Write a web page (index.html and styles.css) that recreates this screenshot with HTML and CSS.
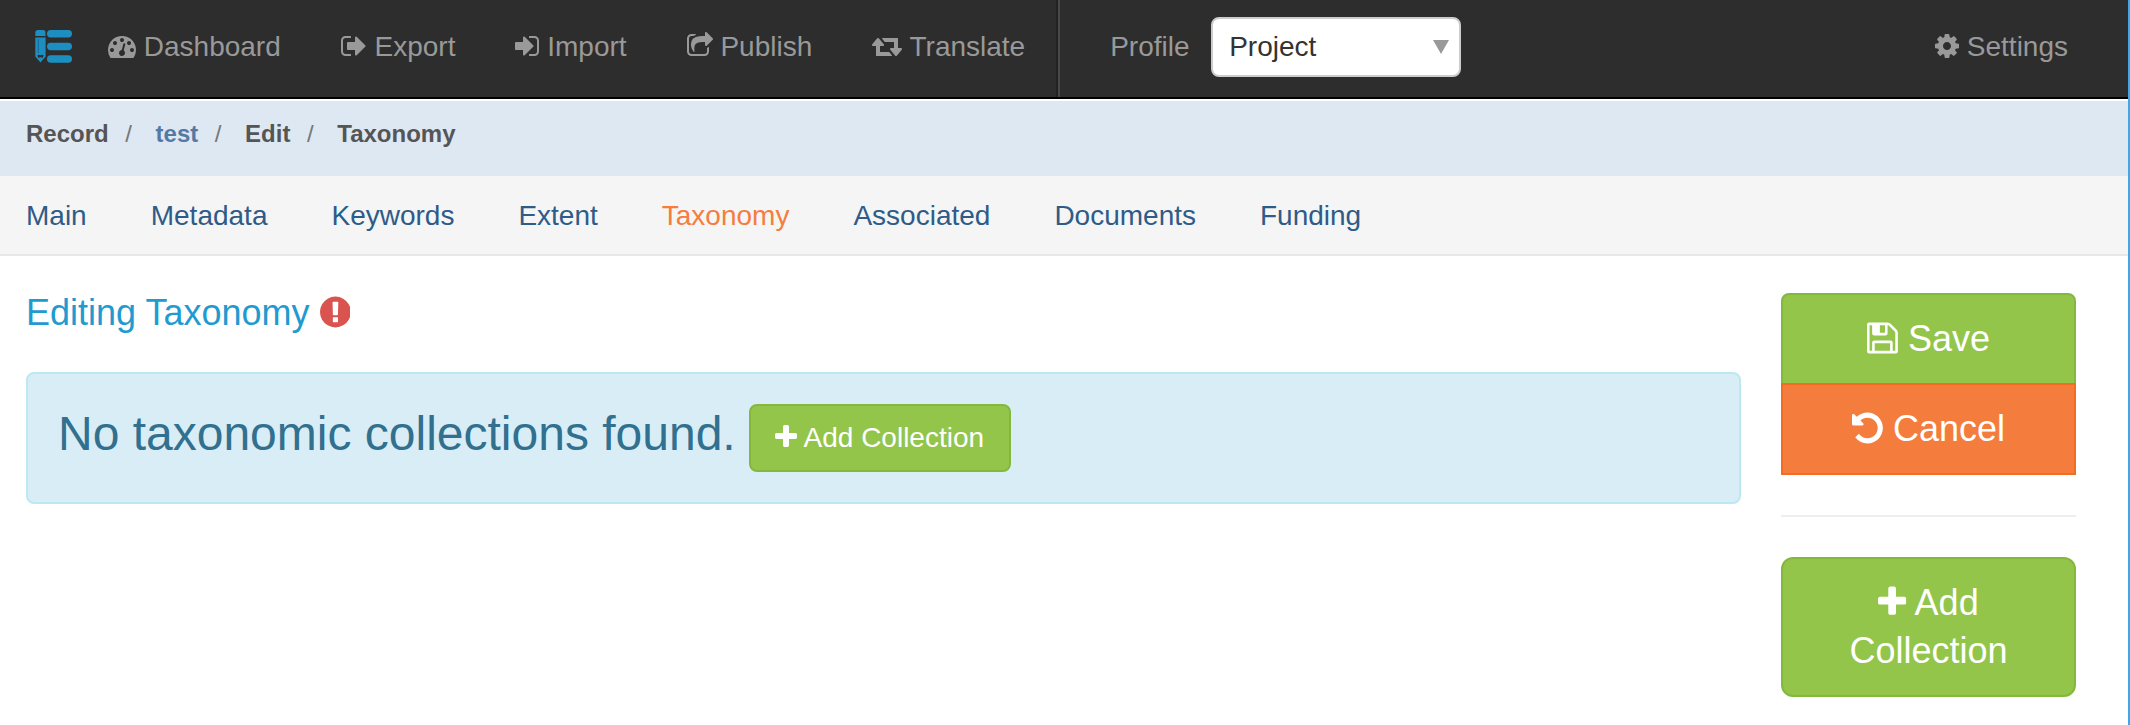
FILE: index.html
```html
<!DOCTYPE html>
<html lang="en">
<head>
<meta charset="utf-8">
<title>Editing Taxonomy</title>
<link rel="stylesheet" href="styles.css">
</head>
<body>
<svg class="defs" width="0" height="0">
<symbol id="plus" viewBox="192 0 1408 1792"><path d="M1600 736v192q0 40-28 68t-68 28h-416v416q0 40-28 68t-68 28h-192q-40 0-68-28t-28-68v-416h-416q-40 0-68-28t-28-68v-192q0-40 28-68t68-28h416v-416q0-40 28-68t68-28h192q40 0 68 28t28 68v416h416q40 0 68 28t28 68z"/></symbol>
</svg>
<div class="app">
<nav class="navbar">
  <a class="brand"><svg class="logo" viewBox="0 0 38 34"><path d="M3 0h5q2.500 0 2.500 2.500V6H.3V2.500Q.3 0 3 0zM.3 7.500h10.300V26.500L5.500 32.500.3 26.500z"/><path class="slit" d="M3.300 9v14"/><path class="ink" d="M2.500 25.300q1.500-1 3 0 1.500-1 3 0l-.8 2.700-1.200-.8H4.500l-1.200.8z"/><rect x="12" y="0" width="25" height="7.500" rx="3.700"/><rect x="12" y="12.700" width="25" height="7.500" rx="3.700"/><rect x="12" y="25.200" width="25" height="7.500" rx="3.700"/></svg></a>
  <a class="nav-item"><svg class="icon" viewBox="0 0 1792 1792"><path d="M384 1152q0-53-37.500-90.500t-90.500-37.500-90.500 37.500-37.500 90.500 37.500 90.500 90.500 37.500 90.500-37.500 37.500-90.500zm192-448q0-53-37.500-90.500t-90.500-37.500-90.500 37.500-37.500 90.500 37.500 90.500 90.500 37.500 90.500-37.500 37.500-90.500zm428 481l101-382q6-26-7.500-48.500t-38.500-29.500-48 6.500-30 39.500l-101 382q-60 5-107 43.500t-63 98.500q-20 77 20 146t117 89 146-20 89-117q16-60-6-117t-72-91zm660-33q0-53-37.500-90.500t-90.500-37.500-90.500 37.500-37.500 90.500 37.500 90.500 90.500 37.500 90.500-37.500 37.500-90.500zm-640-640q0-53-37.500-90.500t-90.500-37.500-90.500 37.500-37.500 90.500 37.500 90.500 90.500 37.500 90.500-37.500 37.500-90.500zm448 192q0-53-37.500-90.500t-90.500-37.500-90.500 37.500-37.500 90.500 37.500 90.500 90.500 37.500 90.500-37.500 37.500-90.500zm320 448q0 261-141 483-19 29-54 29h-1402q-35 0-54-29-141-221-141-483 0-182 71-348t191-286 286-191 348-71 348 71 286 191 191 286 71 348z"/></svg> Dashboard</a>
  <a class="nav-item"><svg class="icon" viewBox="64 0 1664 1792"><path d="M704 1440q0 4 1 20t.5 26.500-3 23.500-10 19.500-20.500 6.500h-320q-119 0-203.500-84.500t-84.500-203.500v-704q0-119 84.500-203.500t203.500-84.500h320q13 0 22.500 9.500t9.500 22.500q0 4 1 20t.5 26.500-3 23.500-10 19.500-20.500 6.500h-320q-66 0-113 47t-47 113v704q0 66 47 113t113 47h312l11.500 1 11.500 3 8 5.500 7 9 2 13.500zm928-544q0 26-19 45l-544 544q-19 19-45 19t-45-19-19-45v-288h-448q-26 0-45-19t-19-45v-384q0-26 19-45t45-19h448v-288q0-26 19-45t45-19 45 19l544 544q19 19 19 45z"/></svg> Export</a>
  <a class="nav-item"><svg class="icon" viewBox="128 0 1536 1792"><path d="M1312 896q0 26-19 45l-544 544q-19 19-45 19t-45-19-19-45v-288h-448q-26 0-45-19t-19-45v-384q0-26 19-45t45-19h448v-288q0-26 19-45t45-19 45 19l544 544q19 19 19 45zm352-352v704q0 119-84.500 203.500t-203.500 84.500h-320q-13 0-22.500-9.500t-9.500-22.500q0-4-1-20t-.5-26.500 3-23.500 10-19.500 20.500-6.500h320q66 0 113-47t47-113v-704q0-66-47-113t-113-47h-312l-11.500-1-11.500-3-8-5.500-7-9-2-13.500q0-4-1-20t-.5-26.500 3-23.500 10-19.500 20.500-6.500h320q119 0 203.500 84.500t84.500 203.500z"/></svg> Import</a>
  <a class="nav-item"><svg class="icon" viewBox="64 0 1664 1792"><path d="M1472 989v259q0 119-84.500 203.500t-203.500 84.500h-832q-119 0-203.500-84.500t-84.500-203.500v-832q0-119 84.500-203.500t203.500-84.500h255q13 0 22.500 9.500t9.500 22.500q0 27-26 32-77 26-133 60-10 4-16 4h-112q-66 0-113 47t-47 113v832q0 66 47 113t113 47h832q66 0 113-47t47-113v-214q0-19 18-29 28-13 54-37 16-16 35-8 21 9 21 29zm237-496l-384 384q-18 19-45 19-12 0-25-5-39-17-39-59v-192h-160q-323 0-438 131-119 137-74 473 3 23-20 34-8 2-12 2-16 0-26-13-10-14-21-31t-39.500-68.500-49.500-99.500-38.500-114-17.500-122q0-49 3.500-91t14-90 28-88 47-81.500 68.500-74 94.500-61.500 124.500-48.500 159.500-30.500 196.500-11h160v-192q0-42 39-59 13-5 25-5 26 0 45 19l384 384q19 19 19 45t-19 45z"/></svg> Publish</a>
  <a class="nav-item"><svg class="icon" viewBox="0 0 1920 1792"><path d="M1280 1504q0 13-9.500 22.500t-22.500 9.500h-960q-8 0-13.500-2t-9-7-5.500-8-3-11.500-1-11.500v-600h-192q-26 0-45-19t-19-45q0-24 15-41l320-384q19-22 49-22t49 22l320 384q15 17 15 41 0 26-19 45t-45 19h-192v384h576q16 0 25 11l160 192q7 10 7 21zm640-416q0 24-15 41l-320 384q-20 23-49 23t-49-23l-320-384q-15-17-15-41 0-26 19-45t45-19h192v-384h-576q-16 0-25-12l-160-192q-7-9-7-20 0-13 9.500-22.500t22.500-9.500h960q8 0 13.500 2t9 7 5.500 8 3 11.500 1 11.500v600h192q26 0 45 19t19 45z"/></svg> Translate</a>
  <div class="profile"><span>Profile</span><div class="select"><span>Project</span><svg class="caret" viewBox="0 0 16 14"><path d="M0 0h16L8 14z"/></svg></div></div>
  <a class="nav-item settings"><svg class="icon" viewBox="128 0 1536 1792"><path d="M1152 896q0-106-75-181t-181-75-181 75-75 181 75 181 181 75 181-75 75-181zm512-109v222q0 12-8 23t-20 13l-185 28q-19 54-39 91 35 50 107 138 10 12 10 25t-9 23q-27 37-99 108t-94 71q-12 0-26-9l-138-108q-44 23-91 38-16 136-29 186-7 28-36 28h-222q-14 0-24.500-8.500t-11.500-21.500l-28-184q-49-16-90-37l-141 107q-10 9-25 9-14 0-25-11-126-114-165-168-7-10-7-23 0-12 8-23 15-21 51-66.500t54-70.500q-27-50-41-99l-183-27q-13-2-21-12.500t-8-23.500v-222q0-12 8-23t19-13l186-28q14-46 39-92-40-57-107-138-10-12-10-24 0-10 9-23 26-36 98.500-107.500t94.500-71.500q13 0 26 10l138 107q44-23 91-38 16-136 29-186 7-28 36-28h222q14 0 24.500 8.500t11.500 21.500l28 184q49 16 90 37l142-107q9-9 24-9 13 0 25 10 129 119 165 170 7 8 7 22 0 12-8 23-15 21-51 66.500t-54 70.500q26 50 41 98l183 28q13 2 21 12.500t8 23.500z"/></svg> Settings</a>
</nav>
<div class="crumbs"><b>Record</b><i>/</i><b class="link">test</b><i>/</i><b>Edit</b><i>/</i><b>Taxonomy</b></div>
<div class="tabs"><a>Main</a><a>Metadata</a><a>Keywords</a><a>Extent</a><a class="active">Taxonomy</a><a>Associated</a><a>Documents</a><a>Funding</a></div>
<div class="content">
  <main class="main">
    <h4 class="title">Editing Taxonomy <svg class="icon danger" viewBox="128 0 1536 1792"><path d="M896 128q209 0 385.500 103t279.500 279.500 103 385.500-103 385.500-279.500 279.500-385.500 103-385.500-103-279.500-279.500-103-385.500 103-385.500 279.500-279.500 385.500-103zm128 1247v-190q0-14-9-23.500t-22-9.500h-192q-13 0-23 10t-10 23v190q0 13 10 23t23 10h192q13 0 22-9.500t9-23.500zm-2-344l18-621q0-12-10-18-10-8-24-8h-220q-14 0-24 8-10 6-10 18l17 621q0 10 10 17.500t24 7.500h185q14 0 23.500-7.500t10.500-17.500z"/></svg></h4>
    <div class="alert"><h3>No taxonomic collections found.</h3><button class="btn"><svg class="icon" viewBox="192 0 1408 1792"><use href="#plus" x="192" width="1408" height="1792"/></svg> Add Collection</button></div>
  </main>
  <aside class="side">
    <button class="btn lg save"><svg class="icon" viewBox="128 0 1536 1792"><path d="M512 1536h768v-384h-768v384zm896 0h128v-896q0-14-10-38.500t-20-34.500l-281-281q-10-10-34-20t-39-10v416q0 40-28 68t-68 28h-576q-40 0-68-28t-28-68v-416h-128v1280h128v-416q0-40 28-68t68-28h832q40 0 68 28t28 68v416zm-384-928v-320q0-13-9.500-22.500t-22.500-9.500h-192q-13 0-22.500 9.500t-9.500 22.500v320q0 13 9.500 22.500t22.500 9.500h192q13 0 22.500-9.500t9.500-22.500zm640 32v928q0 40-28 68t-68 28h-1344q-40 0-68-28t-28-68v-1344q0-40 28-68t68-28h928q40 0 88 20t76 48l280 280q28 28 48 76t20 88z"/></svg> Save</button>
    <button class="btn lg cancel"><svg class="icon" viewBox="128 0 1536 1792"><path d="M1664 896q0 156-61 298t-164 245-245 164-298 61q-172 0-327-72.500t-264-204.500q-7-10-6.500-22.500t8.500-20.500l137-138q10-9 25-9 16 2 23 12 73 95 179 147t225 52q104 0 198.500-40.500t163.500-109.500 109.500-163.500 40.500-198.500-40.500-198.500-109.500-163.500-163.500-109.500-198.500-40.500q-98 0-188 35.500t-160 101.500l137 138q31 30 14 69-17 40-59 40h-448q-26 0-45-19t-19-45v-448q0-42 40-59 39-17 69 14l130 129q107-101 244.500-156.500t284.500-55.500q156 0 298 61t245 164 164 245 61 298z"/></svg> Cancel</button>
    <hr>
    <button class="btn lg"><svg class="icon" viewBox="192 0 1408 1792"><use href="#plus" x="192" width="1408" height="1792"/></svg> Add Collection</button>
  </aside>
</div>
</div>
</body>
</html>
```

FILE: styles.css
```css
* { box-sizing: border-box; }
body {
  margin: 0;
  font: 28px/40px "Liberation Sans", Arial, sans-serif;
  color: #333;
  background: #fff;
}
.defs { display: block; }
.app { height: 725px; border-right: 2px solid #3fa7e8; overflow: hidden; }
.icon { height: 1em; width: auto; vertical-align: -0.143em; fill: currentColor; }

.navbar {
  display: flex;
  height: 99px;
  padding: 0 30px 0 35px;
  background: #2d2d2d;
  border-bottom: 2px solid #000;
  color: #999;
}
.brand { width: 43px; padding-top: 30px; }
.logo { display: block; width: 38px; height: 34px; fill: #1c8fc0; }
.logo .ink { fill: #2d2d2d; }
.logo .slit { stroke: #1e5f8a; stroke-width: 0.9; }
.nav-item { padding: 27px 30px 0; white-space: nowrap; }
.nav-item + .profile { margin-left: 1px; }
.profile {
  display: flex;
  align-items: flex-start;
  border-left: 2px solid #222;
  box-shadow: inset 2px 0 0 #484848;
  padding: 17px 0 0 52px;
}
.profile > span { padding-top: 10px; width: 101px; }
.select {
  display: flex;
  justify-content: space-between;
  align-items: center;
  width: 250px;
  height: 60px;
  padding: 0 10px 0 16px;
  color: #333;
  background: #fff;
  border: 2px solid #ccc;
  border-radius: 8px;
}
.caret { width: 16px; height: 14px; fill: #999; }
.settings { margin-left: auto; }

.crumbs {
  display: flex;
  height: 77px;
  border-top: 2px solid #fff;
  padding: 16px 26px 0;
  font-size: 24px;
  line-height: 34px;
  color: #555;
  background: #dee8f2;
}
.crumbs i { font-style: normal; color: #777; margin: 0 23.700px 0 16.500px; }
.crumbs .link { color: #5579a5; }

.tabs {
  display: flex;
  gap: 64px;
  height: 80px;
  padding: 20px 26px 0;
  background: #f5f5f5;
  border-bottom: 2px solid #e7e7e7;
  color: #2f5b88;
}
.tabs .active { color: #f57d3d; }

.content { display: flex; gap: 40px; padding: 37px 52px 0 26px; }
.main { width: 1715px; }
.title { margin: 0 0 40px; font-size: 36px; font-weight: 400; line-height: 39px; color: #1f9bcf; }
.danger { color: #d9534f; }
.alert {
  display: flex;
  gap: 13px;
  height: 132px;
  padding: 30px;
  border: 2px solid #bce8f1;
  border-radius: 8px;
  background: #d9edf7;
}
.alert h3 { margin: 3px 0 0; font-size: 48px; font-weight: 400; line-height: 53px; color: #31708f; }
.btn {
  padding: 12px 24px;
  font: 28px/40px "Liberation Sans", Arial, sans-serif;
  color: #fff;
  background: #93c54b;
  border: 2px solid #84b83c;
  border-radius: 8px;
}
.alert .btn { height: 68px; width: 262px; padding: 12px 0; white-space: nowrap; }
.side { width: 295px; }
.side .btn { display: block; width: 295px; }
.btn.lg { padding: 20px 32px; font-size: 36px; line-height: 48px; border-radius: 12px; }
.btn.save { border-radius: 8px 8px 0 0; }
.btn.cancel { margin-top: -2px; border-radius: 0; background: #f47c3c; border-color: #f26c24; }
hr { margin: 40px 0; border: 0; border-top: 2px solid #eee; }
```
